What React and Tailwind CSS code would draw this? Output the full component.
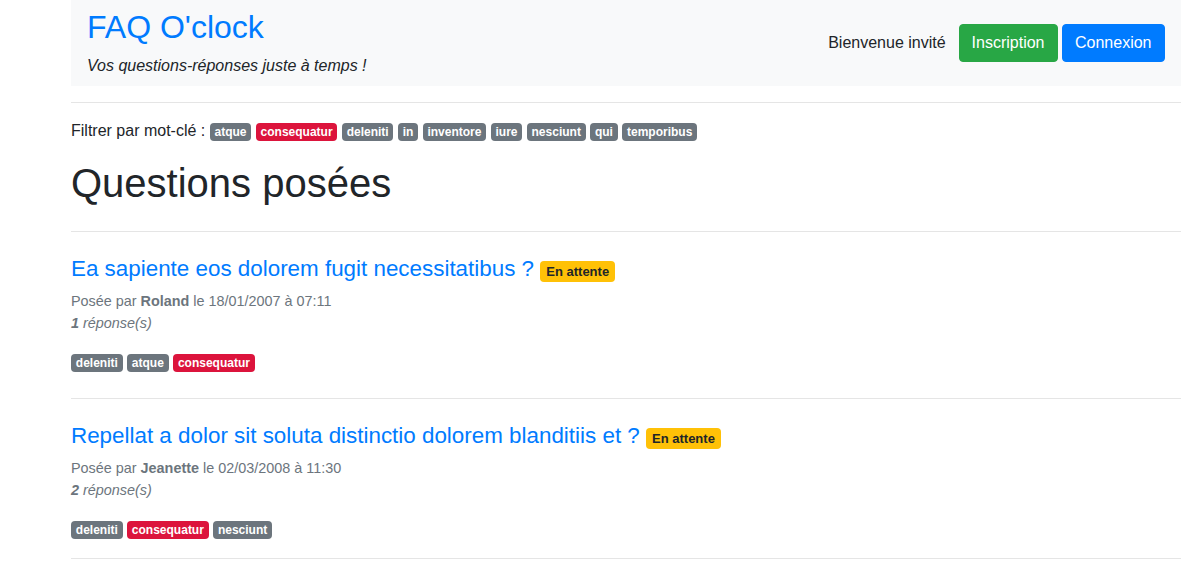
import React from "react";

const font = { fontFamily: '"Liberation Sans", Arial, sans-serif' };

function Badge({ children, red }) {
  return (
    <span
      className={
        "inline-block text-[12px] font-bold leading-[12px] px-[4.8px] py-[3px] rounded-[4px] text-white align-baseline " +
        (red ? "bg-[#dc143c]" : "bg-[#6c757d]")
      }
    >
      {children}
    </span>
  );
}

function Tags({ tags }) {
  return (
    <p className="text-[16px] leading-[24px]">
      {tags.map((t, i) => (
        <React.Fragment key={t}>
          {i > 0 ? " " : null}
          <Badge red={t === "consequatur"}>{t}</Badge>
        </React.Fragment>
      ))}
    </p>
  );
}

function Question({ title, author, date, time, count, tags, last }) {
  return (
    <div className="flex flex-col">
      <h4 className="mt-[7px] text-[22.4px] leading-[27px] text-[#007bff] font-normal">
        {title}{" "}
        <span className="inline-block text-[13px] font-bold leading-[13px] px-[6px] py-[4px] rounded-[4px] bg-[#ffc107] text-[#212529] align-baseline">
          En attente
        </span>
      </h4>
      <div className="mt-[8px] text-[14.4px] leading-[22px] text-[#6c757d]">
        <div>
          Posée par <b>{author}</b> le {date} à {time}
        </div>
        <div className="italic">
          <b>{count}</b> réponse(s)
        </div>
      </div>
      <div className="mt-[16px]">
        <Tags tags={tags} />
      </div>
      <hr
        className={
          "border-0 border-t border-[rgba(0,0,0,0.1)] mb-4 " +
          (last ? "mt-[17px]" : "mt-[24px]")
        }
      />
    </div>
  );
}

export default function App() {
  return (
    <div className="bg-white min-h-[571px] text-[#212529]" style={font}>
      <div className="ml-[71px] w-[1110px] flex flex-col">
        <header className="h-[86px] bg-[#f8f9fa] px-4 flex items-center justify-between">
          <div>
            <h2 className="text-[32px] leading-[38px] text-[#007bff] font-normal">
              FAQ O'clock
            </h2>
            <p className="mt-2 text-[16px] leading-[24px] italic">
              Vos questions-réponses juste à temps !
            </p>
          </div>
          <div className="flex items-center">
            <span className="text-[16px] mr-[13px]">Bienvenue invité</span>
            <button className="h-[38px] px-3 rounded-[4px] bg-[#28a745] text-white text-[16px] border border-[#28a745]">
              Inscription
            </button>
            <button className="ml-1 h-[38px] px-[12.5px] rounded-[4px] bg-[#007bff] text-white text-[16px] border border-[#007bff]">
              Connexion
            </button>
          </div>
        </header>
        <hr className="border-0 border-t border-[rgba(0,0,0,0.1)] mt-4 mb-4" />
        <p className="text-[16px] leading-[24px]">
          Filtrer par mot-clé :{" "}
          {["atque", "consequatur", "deleniti", "in", "inventore", "iure", "nesciunt", "qui", "temporibus"].map(
            (t, i) => (
              <React.Fragment key={t}>
                {i > 0 ? " " : null}
                <Badge red={t === "consequatur"}>{t}</Badge>
              </React.Fragment>
            )
          )}
        </p>
        <h1 className="mt-4 text-[40px] leading-[48px] font-normal">Questions posées</h1>
        <hr className="border-0 border-t border-[rgba(0,0,0,0.1)] mt-6 mb-4" />
        <Question
          title="Ea sapiente eos dolorem fugit necessitatibus ?"
          author="Roland"
          date="18/01/2007"
          time="07:11"
          count="1"
          tags={["deleniti", "atque", "consequatur"]}
        />
        <Question
          title="Repellat a dolor sit soluta distinctio dolorem blanditiis et ?"
          author="Jeanette"
          date="02/03/2008"
          time="11:30"
          count="2"
          tags={["deleniti", "consequatur", "nesciunt"]}
          last
        />
      </div>
    </div>
  );
}
